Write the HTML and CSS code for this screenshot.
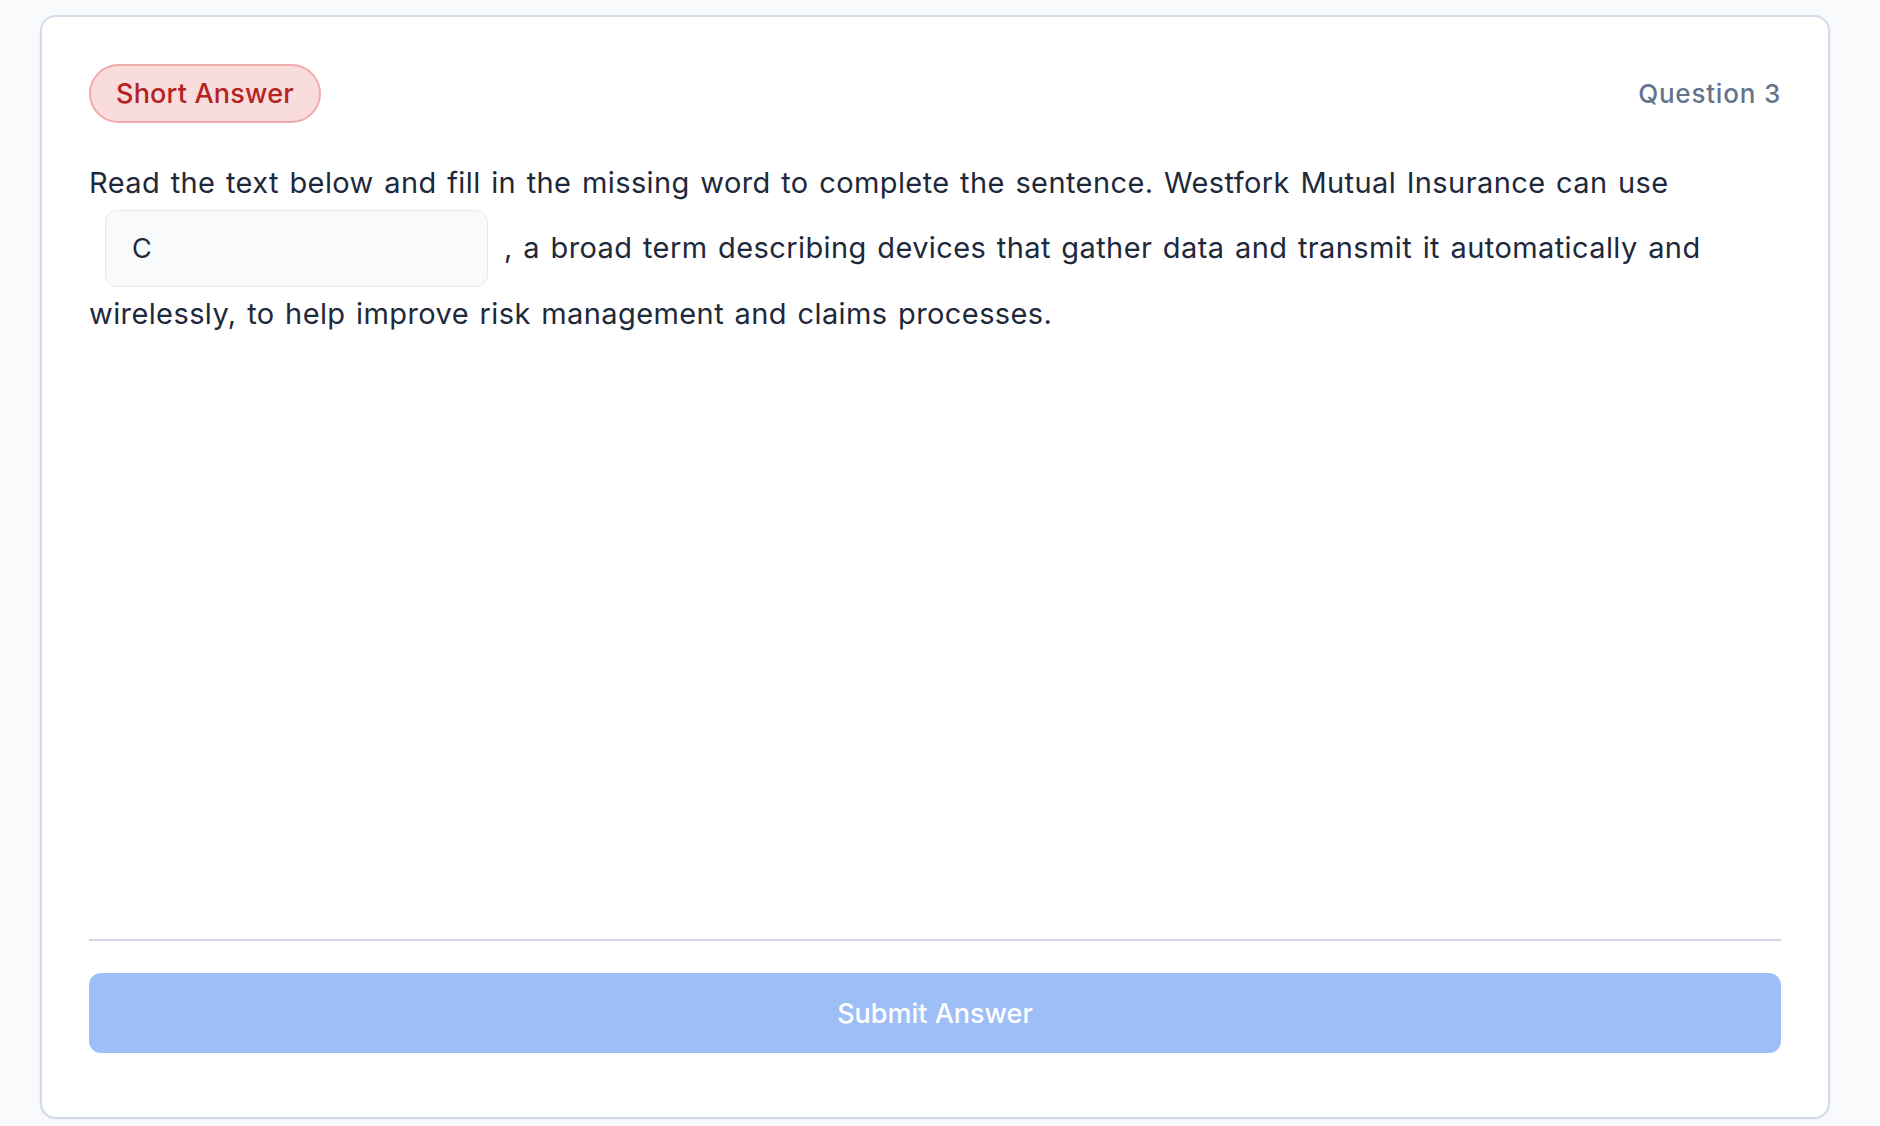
FILE: index.html
```html
<!DOCTYPE html>
<html lang="en">
<head>
<meta charset="utf-8">
<title>Short Answer</title>
<link rel="stylesheet" href="styles.css">
</head>
<body>
<main class="page">
  <section class="card">
    <header class="card-head">
      <span class="badge">Short Answer</span>
      <span class="qnum">Question 3</span>
    </header>
    <div class="card-body">
      <p class="prompt">Read the text below and fill in the missing word to complete the sentence. Westfork Mutual Insurance can use <input class="blank" type="text" value="C" aria-label="Answer">, a broad term describing devices that gather data and transmit it automatically and wirelessly, to help improve risk management and claims processes.</p>
    </div>
    <footer class="card-foot">
      <button class="submit" type="button">Submit Answer</button>
    </footer>
  </section>
</main>
</body>
</html>
```

FILE: styles.css
```css
html, body {
  margin: 0;
  padding: 0;
  background: #f8fafc;
}
body {
  font-family: Inter, "Noto Sans", "Liberation Sans", sans-serif;
  color: #1e293b;
}
.page {
  padding: 15px 50px 0 40px;
  height: 1126px;
  box-sizing: border-box;
  overflow: hidden;
}
.card {
  background: #ffffff;
  border: 2px solid #d3dbe6;
  border-radius: 16px;
  box-shadow: 0 1px 3px rgba(15, 23, 42, 0.06);
  height: 1104px;
  box-sizing: border-box;
  padding: 47px 47px 64px 47px;
  display: flex;
  flex-direction: column;
}
.card-head {
  display: flex;
  justify-content: space-between;
  align-items: center;
  height: 59px;
}
.badge {
  display: inline-flex;
  align-items: center;
  height: 59px;
  box-sizing: border-box;
  padding: 0 25px;
  border: 2px solid #f2aaaa;
  background: #f9dcdc;
  color: #b42424;
  border-radius: 999px;
  font-size: 27px;
  font-weight: 500;
  letter-spacing: 0.2px;
}
.qnum {
  font-size: 26px;
  font-weight: 500;
  letter-spacing: 0.8px;
  color: #64748b;
}
.card-body {
  flex: 1;
  padding-top: 39px;
}
.prompt {
  margin: 0;
  font-size: 29px;
  line-height: 42px;
  letter-spacing: 0.4px;
  word-spacing: 2px;
  color: #1e293b;
}
.blank {
  display: inline-block;
  width: 383px;
  height: 77px;
  box-sizing: border-box;
  margin: 6px 16px;
  padding: 0 26px;
  border: 1.5px solid #e5e9ef;
  border-radius: 12px;
  background: #f8fafc;
  font-family: inherit;
  font-size: 27px;
  letter-spacing: 0;
  color: #1e293b;
  vertical-align: baseline;
  outline: none;
}
.card-foot {
  border-top: 2px solid #d0d8e3;
  padding-top: 32px;
}
.submit {
  display: block;
  width: 100%;
  height: 80px;
  border: 0;
  border-radius: 12px;
  background: #9ebef7;
  color: #ffffff;
  font-family: inherit;
  font-size: 27px;
  font-weight: 500;
  cursor: not-allowed;
}
```
